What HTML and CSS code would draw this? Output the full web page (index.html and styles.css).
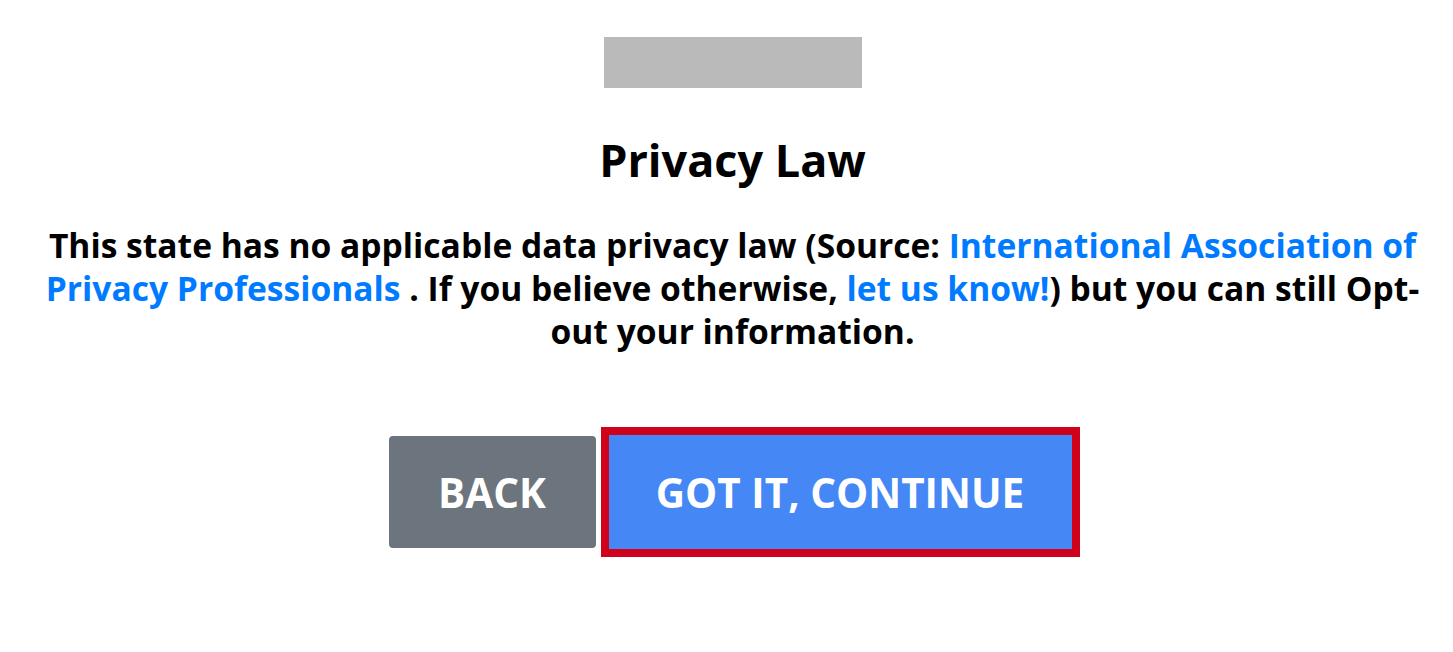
FILE: index.html
```html
<!DOCTYPE html>
<html lang="en">
<head>
    <meta charset="UTF-8">
    <meta name="viewport" content="width=device-width, initial-scale=1.0">
    <title>Privacy Law</title>
    <link rel="stylesheet" href="styles.css">
</head>
<body>
    <div class="page">
        <div class="logo"></div>

        <h1 class="title">Privacy Law</h1>

        <p class="notice">
            This state has no applicable data privacy law (Source: <a href="#">International Association of Privacy Professionals</a> . If you believe otherwise, <a href="#">let us know!</a>) but you can still Opt-out your information.
        </p>

        <div class="actions">
            <button type="button" class="btn btn-back">BACK</button>
            <button type="button" class="btn btn-continue">GOT IT, CONTINUE</button>
        </div>
    </div>
</body>
</html>
```

FILE: styles.css
```css
body {
    margin: 0;
    font-family: "Open Sans", "Noto Sans", Arial, sans-serif;
    background-color: #ffffff;
    color: #000000;
}
.page {
    padding: 37px 0 0 12px;
    display: flex;
    flex-direction: column;
    align-items: center;
}
.logo {
    width: 258px;
    height: 51px;
    background-color: #bababa;
}
.title {
    margin: 42px 0 0;
    font-size: 45px;
    line-height: 60px;
    font-weight: 700;
}
.notice {
    width: 1400px;
    margin: 34px 0 0;
    font-size: 33.6px;
    line-height: 43px;
    font-weight: 700;
    text-align: center;
}
.notice a {
    color: #007bff;
    text-decoration: none;
}
.actions {
    margin: 74px 0 0 3px;
    display: flex;
    align-items: center;
}
.btn {
    height: 112px;
    padding: 0;
    border: none;
    border-radius: 4px;
    color: #ffffff;
    font-family: inherit;
    font-size: 40.5px;
    font-weight: 700;
    cursor: pointer;
}
.btn-back {
    width: 207px;
    background-color: #6c757d;
}
.btn-continue {
    box-sizing: content-box;
    width: 463px;
    height: 114px;
    margin-left: 5px;
    border: 8px solid #d0021b;
    border-radius: 0;
    background-color: #4487f5;
}
```
